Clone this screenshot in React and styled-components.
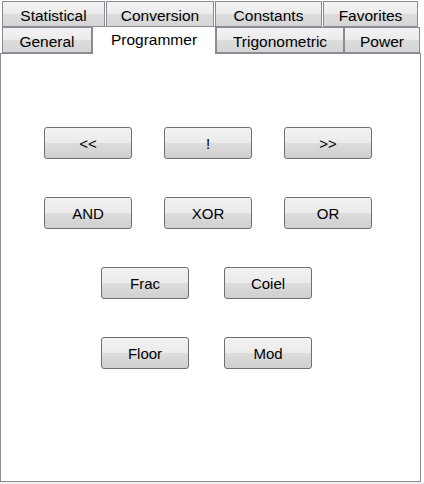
import styled, { createGlobalStyle } from 'styled-components';

const GlobalStyle = createGlobalStyle`
  body {
    margin: 0;
    background: #fff;
    font-family: "Liberation Sans", Arial, sans-serif;
  }
`;

const topTabs = [
  { label: 'Statistical', width: 103 },
  { label: 'Conversion', width: 108 },
  { label: 'Constants', width: 107 },
  { label: 'Favorites', width: 95 },
];

const bottomTabs = [
  { label: 'General', width: 90 },
  { label: 'Programmer', width: 124, active: true },
  { label: 'Trigonometric', width: 128 },
  { label: 'Power', width: 76 },
];

const rows = [
  { indent: 43, gap: 32, keys: ['<<', '!', '>>'] },
  { indent: 43, gap: 32, keys: ['AND', 'XOR', 'OR'] },
  { indent: 100, gap: 35, keys: ['Frac', 'Coiel'] },
  { indent: 100, gap: 35, keys: ['Floor', 'Mod'] },
];

function App() {
  return (
    <Frame>
      <GlobalStyle />
      <TabRow $top>
        {topTabs.map(t => (
          <Tab key={t.label} $width={t.width}>{t.label}</Tab>
        ))}
      </TabRow>
      <TabRow>
        {bottomTabs.map(t => (
          <Tab key={t.label} $width={t.width} $active={t.active}>{t.label}</Tab>
        ))}
      </TabRow>
      <Panel>
        {rows.map((r, i) => (
          <KeyRow key={i} $indent={r.indent} $gap={r.gap}>
            {r.keys.map(k => (
              <Key key={k}>{k}</Key>
            ))}
          </KeyRow>
        ))}
      </Panel>
      <Footer />
    </Frame>
  );
}

export default App;

const Frame = styled.div`
  width: 424px;
  height: 484px;
  display: flex;
  flex-direction: column;
  background: #fff;
`;

const TabRow = styled.div`
  display: flex;
  align-items: flex-end;
  gap: ${p => (p.$top ? '1px' : '0')};
  height: ${p => (p.$top ? '25px' : '26px')};
  margin-top: ${p => (p.$top ? '2px' : '0')};
  padding-left: 2px;
  position: relative;
  z-index: ${p => (p.$top ? 0 : 1)};
`;

const Tab = styled.div`
  box-sizing: border-box;
  width: ${p => p.$width}px;
  height: ${p => (p.$active ? '28px' : '26px')};
  margin-bottom: ${p => (p.$active ? '-1px' : '0')};
  border: 1px solid #898c95;
  border-bottom: ${p => (p.$active ? 'none' : '1px solid #898c95')};
  background: ${p =>
    p.$active
      ? '#fff'
      : 'linear-gradient(to bottom, #f3f3f3 0%, #ebebeb 50%, #dcdcdc 51%, #d6d6d6 100%)'};
  position: relative;
  z-index: ${p => (p.$active ? 2 : 0)};
  display: flex;
  align-items: ${p => (p.$active ? 'flex-start' : 'center')};
  padding-top: ${p => (p.$active ? '4px' : '3px')};
  justify-content: center;
  font-size: 15.5px;
  color: #000;
  white-space: nowrap;
`;

const Panel = styled.div`
  box-sizing: border-box;
  width: 421px;
  height: 429px;
  border: 1px solid #898c95;
  background: #fff;
  display: flex;
  flex-direction: column;
  gap: 38px;
  padding-top: 73px;
`;

const KeyRow = styled.div`
  display: flex;
  gap: ${p => p.$gap}px;
  padding-left: ${p => p.$indent}px;
`;

const Key = styled.button`
  box-sizing: border-box;
  width: 88px;
  height: 32px;
  border: 1px solid #707070;
  border-radius: 3px;
  background: linear-gradient(to bottom, #f2f2f2 0%, #ebebeb 50%, #dddddd 51%, #cfcfcf 100%);
  font-family: "Liberation Sans", Arial, sans-serif;
  font-size: 15px;
  color: #000;
  padding: 0;
`;

const Footer = styled.div`
  flex: 1;
  background: #f0f0f0;
`;
